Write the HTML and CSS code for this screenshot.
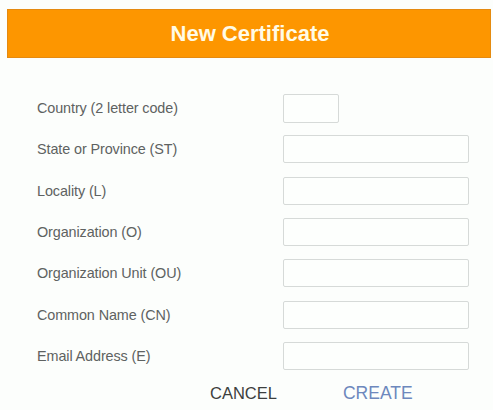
FILE: index.html
```html
<!DOCTYPE html>
<html>
<head>
<meta charset="utf-8">
<link rel="stylesheet" href="styles.css">
</head>
<body>
<div class="dialog">
  <div class="header">New Certificate</div>
  <form class="form">
    <label class="label">Country (2 letter code)</label>
    <input class="field short" type="text">
    <label class="label">State or Province (ST)</label>
    <input class="field" type="text">
    <label class="label">Locality (L)</label>
    <input class="field" type="text">
    <label class="label">Organization (O)</label>
    <input class="field" type="text">
    <label class="label">Organization Unit (OU)</label>
    <input class="field" type="text">
    <label class="label">Common Name (CN)</label>
    <input class="field" type="text">
    <label class="label">Email Address (E)</label>
    <input class="field" type="text">
  </form>
  <div class="actions">
    <button class="btn cancel" type="button">CANCEL</button>
    <button class="btn create" type="button">CREATE</button>
  </div>
</div>
</body>
</html>
```
FILE: styles.css
```css
html, body {
  margin: 0;
  padding: 0;
  background: #fcfefc;
}
body {
  font-family: "Liberation Sans", Arial, sans-serif;
  width: 493px;
  height: 410px;
  overflow: hidden;
}
.dialog {
  padding-top: 9px;
}
.header {
  margin: 0 2px 0 7px;
  height: 49px;
  box-sizing: border-box;
  background: #fd9600;
  border: 1px solid #e58a10;
  color: #fffbe6;
  font-weight: bold;
  font-size: 22px;
  display: flex;
  align-items: center;
  justify-content: center;
  padding-left: 2px;
}
.form {
  margin: 36px 0 0 0;
  padding-left: 37px;
  display: grid;
  grid-template-columns: 246px 186px;
  grid-auto-rows: 28px;
  row-gap: 13.33px;
  align-items: center;
}
.label {
  font-size: 14.4px;
  color: #5e6261;
  letter-spacing: -0.1px;
}
.field {
  box-sizing: border-box;
  height: 28px;
  width: 186px;
  margin: 0;
  border: 1.5px solid #d6dad8;
  border-radius: 2px;
  background: #fdfffd;
  padding: 0 4px;
}
.field.short {
  width: 56px;
  height: 29px;
}
.actions {
  display: flex;
  margin-top: 13px;
  padding-left: 204px;
  gap: 54px;
}
.btn {
  border: none;
  background: none;
  font-family: "Liberation Sans", Arial, sans-serif;
  font-size: 16.5px;
  padding: 0 6px;
  cursor: pointer;
}
.cancel {
  color: #3c3f3e;
}
.create {
  color: #6d88bd;
  font-size: 17.5px;
}
```
